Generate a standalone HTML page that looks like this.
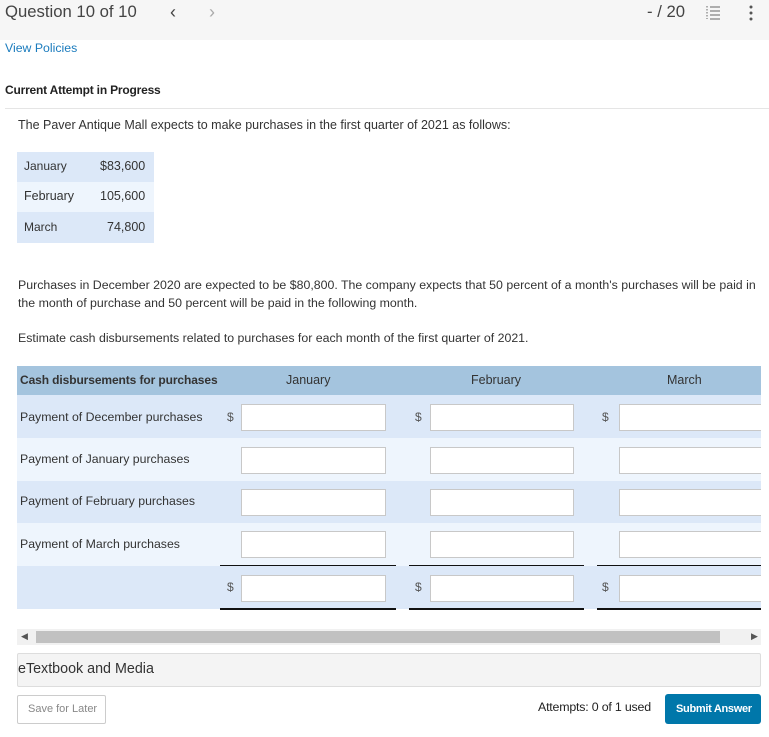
<!DOCTYPE html>
<html><head><meta charset="utf-8"><style>
*{margin:0;padding:0;box-sizing:border-box}
body{width:769px;height:737px;position:relative;background:#fff;font-family:"Liberation Sans",sans-serif;color:#333;overflow:hidden}
.a{position:absolute;white-space:nowrap}
.t{font-size:12px;color:#333}
.in{position:absolute;background:#fff;border:1px solid #c8c8c8;height:27px}
.r{position:absolute;left:17px;width:744px}
.d{position:absolute;font-size:12px;color:#555}
.ln{position:absolute;height:2px;background:#111}
</style></head><body>
<div class="a" style="left:0;top:0;width:769px;height:40px;background:#f6f6f6"></div>
<div class="a" style="left:5px;top:2px;font-size:16.7px;color:#444">Question 10 of 10</div>
<div class="a" style="left:170px;top:2px;font-size:18px;color:#444">&#8249;</div>
<div class="a" style="left:209px;top:2px;font-size:18px;color:#aaa">&#8250;</div>
<div class="a" style="left:647px;top:2px;font-size:16.7px;color:#444">- / 20</div>
<svg class="a" style="left:706px;top:4px" width="14" height="16" viewBox="0 0 14 16"><g stroke="#666" stroke-width="1"><line x1="4" y1="3" x2="14" y2="3"/><line x1="4" y1="7" x2="14" y2="7"/><line x1="4" y1="11" x2="14" y2="11"/><line x1="4" y1="15" x2="14" y2="15"/><line x1="1" y1="2" x2="1" y2="15" stroke-dasharray="1.5 1.5"/></g></svg>
<svg class="a" style="left:748px;top:4px" width="6" height="18"><circle cx="3" cy="3" r="1.5" fill="#555"/><circle cx="3" cy="9" r="1.5" fill="#555"/><circle cx="3" cy="15" r="1.5" fill="#555"/></svg>
<div class="a" style="left:5px;top:41px;font-size:12.3px;color:#1a7bbd">View Policies</div>
<div class="a" style="left:5px;top:83px;font-size:12px;font-weight:bold;color:#222;letter-spacing:-0.2px">Current Attempt in Progress</div>
<div class="a" style="left:5px;top:108px;width:764px;height:1px;background:#e5e5e5"></div>
<div class="a t" style="left:18px;top:118px;font-size:12.5px">The Paver Antique Mall expects to make purchases in the first quarter of 2021 as follows:</div>
<div class="a" style="left:17px;top:152px;width:137px;height:30px;background:#dce8f8"></div>
<div class="a" style="left:17px;top:182px;width:137px;height:30px;background:#eef5fd"></div>
<div class="a" style="left:17px;top:212px;width:137px;height:31px;background:#dce8f8"></div>
<div class="a t" style="left:24px;top:159px">January</div><div class="a t" style="left:100px;top:159px;font-size:12.5px">$83,600</div>
<div class="a t" style="left:24px;top:189px;font-size:12.5px">February</div><div class="a t" style="left:100px;top:189px;font-size:12.5px">105,600</div>
<div class="a t" style="left:24px;top:220px">March</div><div class="a t" style="left:107px;top:220px;font-size:12.5px">74,800</div>
<div class="a t" style="left:18px;top:278px;font-size:12.35px">Purchases in December 2020 are expected to be $80,800. The company expects that 50 percent of a month's purchases will be paid in</div>
<div class="a t" style="left:18px;top:296px;font-size:12.35px">the month of purchase and 50 percent will be paid in the following month.</div>
<div class="a t" style="left:18px;top:331px;font-size:12.35px">Estimate cash disbursements related to purchases for each month of the first quarter of 2021.</div>
<div class="r" style="top:366px;height:29px;background:#a4c4de"></div>
<div class="a" style="left:20px;top:373px;font-size:12px;font-weight:bold;color:#333;letter-spacing:-0.1px">Cash disbursements for purchases</div>
<div class="a" style="left:286px;top:373px;font-size:12.5px;color:#333">January</div>
<div class="a" style="left:471px;top:373px;font-size:12.5px;color:#333">February</div>
<div class="a" style="left:667px;top:373px;font-size:12.5px;color:#333">March</div>
<div class="r" style="top:395px;height:43px;background:#dce8f8"></div>
<div class="r" style="top:438px;height:43px;background:#eef5fd"></div>
<div class="r" style="top:481px;height:42px;background:#dce8f8"></div>
<div class="r" style="top:523px;height:43px;background:#eef5fd"></div>
<div class="r" style="top:566px;height:43px;background:#dce8f8"></div>
<div class="a t" style="left:20px;top:410px;font-size:12.3px">Payment of December purchases</div>
<div class="a t" style="left:20px;top:452px;font-size:12.3px">Payment of January purchases</div>
<div class="a t" style="left:20px;top:494px;font-size:12.3px">Payment of February purchases</div>
<div class="a t" style="left:20px;top:537px;font-size:12.3px">Payment of March purchases</div>
<div class="d" style="left:227px;top:410px">$</div><div class="d" style="left:415px;top:410px">$</div><div class="d" style="left:602px;top:410px">$</div>
<div class="d" style="left:227px;top:580px">$</div><div class="d" style="left:415px;top:580px">$</div><div class="d" style="left:602px;top:580px">$</div>
<div class="in" style="left:241px;top:404px;width:145px"></div><div class="in" style="left:430px;top:404px;width:144px"></div><div class="in" style="left:619px;top:404px;width:150px"></div>
<div class="in" style="left:241px;top:447px;width:145px"></div><div class="in" style="left:430px;top:447px;width:144px"></div><div class="in" style="left:619px;top:447px;width:150px"></div>
<div class="in" style="left:241px;top:489px;width:145px"></div><div class="in" style="left:430px;top:489px;width:144px"></div><div class="in" style="left:619px;top:489px;width:150px"></div>
<div class="in" style="left:241px;top:531px;width:145px"></div><div class="in" style="left:430px;top:531px;width:144px"></div><div class="in" style="left:619px;top:531px;width:150px"></div>
<div class="in" style="left:241px;top:575px;width:145px"></div><div class="in" style="left:430px;top:575px;width:144px"></div><div class="in" style="left:619px;top:575px;width:150px"></div>
<div class="ln" style="left:220px;top:565px;width:176px;height:1px"></div><div class="ln" style="left:409px;top:565px;width:175px;height:1px"></div><div class="ln" style="left:597px;top:565px;width:172px;height:1px"></div>
<div class="ln" style="left:220px;top:608px;width:176px"></div><div class="ln" style="left:409px;top:608px;width:175px"></div><div class="ln" style="left:597px;top:608px;width:172px"></div>
<div class="a" style="left:761px;top:360px;width:8px;height:260px;background:#fff"></div>
<div class="a" style="left:17px;top:629px;width:744px;height:16px;background:#f1f1f1"></div>
<div class="a" style="left:36px;top:631px;width:684px;height:12px;background:#c1c1c1"></div>
<div class="a" style="left:21px;top:631px;font-size:9px;color:#555">&#9664;</div>
<div class="a" style="left:751px;top:631px;font-size:9px;color:#555">&#9654;</div>
<div class="a" style="left:17px;top:653px;width:744px;height:34px;background:#f4f4f4;border:1px solid #ddd;border-radius:2px"></div>
<div class="a" style="left:18px;top:661px;font-size:14.3px;color:#333">eTextbook and Media</div>
<div class="a" style="left:17px;top:695px;width:89px;height:29px;border:1px solid #ccc;border-radius:2px;background:#fff"></div>
<div class="a" style="left:28px;top:703px;font-size:11px;color:#888">Save for Later</div>
<div class="a" style="left:538px;top:700px;font-size:12.4px;color:#222;letter-spacing:-0.2px">Attempts: 0 of 1 used</div>
<div class="a" style="left:665px;top:694px;width:96px;height:30px;background:#0077aa;border-radius:3px"></div>
<div class="a" style="left:676px;top:703px;font-size:11px;font-weight:bold;color:#fff;letter-spacing:-0.3px">Submit Answer</div>
</body></html>
